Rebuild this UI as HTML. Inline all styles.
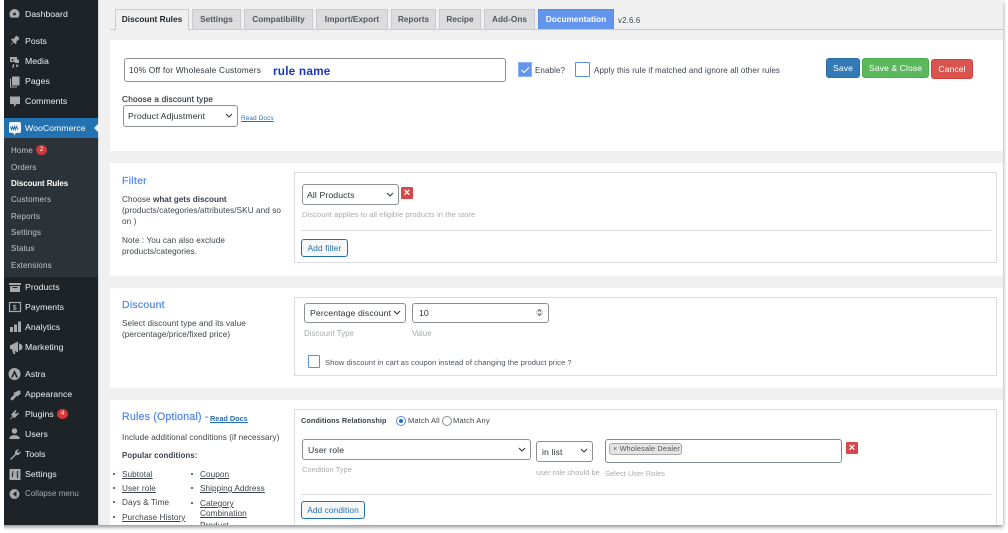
<!DOCTYPE html>
<html><head><meta charset="utf-8"><style>
html,body{margin:0;padding:0;background:#fff}
#r{position:relative;width:1008px;height:533px;overflow:hidden;background:#fff;font-family:"Liberation Sans",sans-serif;color:#3c434a}
#r div,#r span.a,#r svg{position:absolute}
.t{white-space:nowrap;font-size:8.2px;line-height:14px;letter-spacing:.07px}
.m{left:25px;color:#eef0f1;font-size:8.7px;letter-spacing:.04px;line-height:12px;white-space:nowrap}
.s{left:11px;color:#c3c6c8;font-size:8px;letter-spacing:.16px;line-height:12px;white-space:nowrap}
.tab{top:9px;height:19px;background:#dcdcde;border:1px solid #c9cbce;border-bottom:0;font-size:8.3px;font-weight:bold;color:#50575e;text-align:center;line-height:19px;letter-spacing:0;box-sizing:content-box;white-space:nowrap}
.p{left:110px;width:893px;background:#fff}
.b{left:294px;width:703px;background:#fff;border:1px solid #dcdcde;box-sizing:border-box}
.i{background:#fff;border:1px solid #8c8f94;border-radius:3px;box-sizing:border-box;font-size:8.7px;color:#2c3338;white-space:nowrap;letter-spacing:.1px}
.h{color:#4f86e8;font-size:10.5px;line-height:14px;letter-spacing:.25px;white-space:nowrap;-webkit-text-stroke:.2px #4f86e8}
.g{color:#a7aaad;font-size:7.6px;letter-spacing:.05px;line-height:11px;white-space:nowrap}
.x{width:12px;height:12px;background:#d9474a;border-radius:1px;color:#fff;font-size:11px;font-weight:bold;text-align:center;line-height:12px}
.u{text-decoration:underline}
.btn{color:#fff;font-size:8.6px;text-align:center;border-radius:3px;box-sizing:border-box;letter-spacing:.1px;white-space:nowrap}
.d{width:2px;height:2px;border-radius:50%;background:#3c434a}
</style></head><body><div id="r">

<div style="left:0;top:0;width:1003px;height:525px;background:#f0f0f1;box-shadow:0 2px 4px rgba(0,0,0,.45)"></div>
<div style="left:0;top:0;width:4px;height:533px;background:#fff"></div>

<!-- sidebar -->
<div style="left:4px;top:0;width:94px;height:525px;background:#1d2327"></div>
<div style="left:98px;top:0;width:1px;height:525px;background:#d5d6d7"></div>
<div style="left:4px;top:118px;width:94px;height:20px;background:#2271b1"></div>
<div style="left:4px;top:138px;width:94px;height:139px;background:#2c3338"></div>
<svg style="left:94px;top:123px" width="5" height="10"><path d="M5 0L0 5L5 10Z" fill="#f0f0f1"/></svg>

<svg style="left:0;top:0" width="26" height="510" viewBox="0 0 26 510" fill="#a7aaad">
<path d="M9.5 14a5 5 0 0 1 10 0c0 1.5-.6 2.8-1.4 3.600h-7.200C10.100 16.800 9.500 15.500 9.500 14z"/>
<circle cx="14.500" cy="14" r="1.400" fill="#1d2327"/>
<path d="M10 46l3-4.500-2-2 1-1 1.500.5 2.500-3 1-.2 2.300 2.500-.2 1-3 2.500.5 1.500-1 1-2-2z"/>
<path d="M10 57h7v2.500h2V63h-4v-1h-5zM12.500 59a1 1 0 1 0 .1 0zM17 64.500a1.200 1.200 0 1 0 .1 0zM13 64v1.800a1 1 0 1 0 1 1V64z"/>
<path d="M12 76.500h7.500v9H12zM10 78.500h1v8h6v1h-7z"/>
<path d="M10 96.500h10v7.500h-3.500l-2.500 3v-3h-4z"/>
<rect x="9" y="122" width="12" height="11" rx="2" fill="#f0f0f1"/><path d="M13 133l2 2.500 .5-2.500z" fill="#f0f0f1"/><path d="M10.500 126.500l1 3 1-2.500 1 2.500 1-3 1 3 1-3 1.500 3" stroke="#2271b1" stroke-width="1" fill="none"/>
<path d="M9 283h12v2H9zM10 286h10v6H10z"/><rect x="12.500" y="287" width="5" height="1" fill="#1d2327"/>
<rect x="9.500" y="302.500" width="11" height="9" fill="none" stroke="#a7aaad" stroke-width="1.200"/><text x="12.700" y="310" font-size="7" font-family="Liberation Sans" font-weight="bold">$</text>
<path d="M10 327h3v5h-3zM14 324.500h3v7.500h-3zM18 321.500h3v10.500h-3z"/>
<path d="M11 345l7-3.500v11l-7-3.500h-1v-4zM12 350l1.500 4h2l-1-3.500zM19 343.500a3.500 3.500 0 0 1 0 7z"/>
<circle cx="14.500" cy="374" r="6"/><path d="M14.500 370l-3.500 7.500h1.800l1.700-3.700 1.700 3.700H18z" fill="#1d2327"/>
<path d="M10 399l4.500-5-1-1 1-1 1 .5 2.500-2 3 .5-1 1 1 2-2.500 1-.5 1.500-1.500-.5-4 4.500z"/>
<path d="M10 419l2.500-3-1.500-1.500 2.500-2.500 2-2 1 1-1.500 2 1 1 2-1.500 1 1-2 2-2.500 2.500-1.500-1-2.500 2.500z"/>
<circle cx="14.500" cy="431" r="2.700"/><path d="M9.500 439v-2l3-1.800h4l3 1.800v2z"/>
<path d="M10 459l5-5a3.500 3.500 0 0 1 4-4.500l-2 2 1.500 1.500 2-2a3.500 3.500 0 0 1-4.500 4l-5 5z"/>
<path d="M9.500 469h11v11h-11z"/><path d="M12.500 477v-4M12 472h1.500M17.500 471v2M17.500 475v3M16.500 474h2" stroke="#1d2327" stroke-width="1.100" fill="none"/>
<circle cx="14.500" cy="494" r="5"/><path d="M16.500 491l-3.800 3 3.800 3z" fill="#1d2327"/>
</svg>

<div class="m" style="top:8px">Dashboard</div>
<div class="m" style="top:35px">Posts</div>
<div class="m" style="top:55px">Media</div>
<div class="m" style="top:75px">Pages</div>
<div class="m" style="top:95px">Comments</div>
<div class="m" style="top:122px;color:#fff">WooCommerce</div>
<div class="s" style="top:145px">Home</div>
<div style="left:36px;top:145px;width:11px;height:10px;border-radius:5px;background:#d63638;color:#fff;font-size:6.500px;line-height:10px;text-align:center">2</div>
<div class="s" style="top:162px">Orders</div>
<div class="s" style="top:178px;color:#fff;font-weight:bold;letter-spacing:-.08px">Discount Rules</div>
<div class="s" style="top:194px">Customers</div>
<div class="s" style="top:211px">Reports</div>
<div class="s" style="top:227px">Settings</div>
<div class="s" style="top:243px">Status</div>
<div class="s" style="top:260px">Extensions</div>
<div class="m" style="top:281px">Products</div>
<div class="m" style="top:301px">Payments</div>
<div class="m" style="top:321px">Analytics</div>
<div class="m" style="top:341px">Marketing</div>
<div class="m" style="top:368px">Astra</div>
<div class="m" style="top:388px">Appearance</div>
<div class="m" style="top:408px">Plugins</div>
<div style="left:57px;top:409px;width:11px;height:10px;border-radius:5px;background:#d63638;color:#fff;font-size:6.500px;line-height:10px;text-align:center">4</div>
<div class="m" style="top:428px">Users</div>
<div class="m" style="top:448px">Tools</div>
<div class="m" style="top:468px">Settings</div>
<div class="m" style="top:488px;color:#a7aaad;font-size:8px">Collapse menu</div>

<!-- tabs -->
<div style="left:110px;top:29px;width:893px;height:1px;background:#c9cbce"></div>
<div class="tab" style="left:115px;width:72px;background:#f0f0f1;height:20px;color:#1d2327">Discount Rules</div>
<div class="tab" style="left:192px;width:47px">Settings</div>
<div class="tab" style="left:244px;width:67px">Compatibility</div>
<div class="tab" style="left:316px;width:70px">Import/Export</div>
<div class="tab" style="left:391px;width:43px">Reports</div>
<div class="tab" style="left:439px;width:40px">Recipe</div>
<div class="tab" style="left:484px;width:49px">Add-Ons</div>
<div class="tab" style="left:538px;width:74px;background:#6495ed;border-color:#5c8de0;color:#fff">Documentation</div>
<div class="t" style="left:618px;top:14px;font-size:7.800px;letter-spacing:.2px;color:#3c434a">v2.6.6</div>

<!-- panel 1 -->
<div class="p" style="top:40px;height:111px"></div>
<div class="i" style="left:124px;top:58px;width:382px;height:24px;line-height:22px;padding-left:4px;font-size:8.300px;letter-spacing:.22px">10% Off for Wholesale Customers</div>
<div class="t" style="left:273px;top:64px;font-size:11.800px;line-height:14px;font-weight:bold;color:#1b35c4;letter-spacing:.2px">rule name</div>
<div style="left:518px;top:62px;width:14px;height:15px;background:#6495ed;border:1px solid #8fb0ee;box-sizing:border-box"></div>
<svg style="left:518px;top:62px" width="14" height="15"><path d="M3.500 8l2.500 2.500L11 5.500" stroke="#fff" stroke-width="1.100" fill="none"/></svg>
<div class="t" style="left:535px;top:64px;font-size:8px;letter-spacing:.1px">Enable?</div>
<div style="left:575px;top:62px;width:15px;height:15px;background:#fff;border:1.200px solid #5b8dea;border-radius:1px;box-sizing:border-box"></div>
<div class="t" style="left:594px;top:64px;font-size:8px;letter-spacing:.12px">Apply this rule if matched and ignore all other rules</div>
<div class="btn" style="left:826px;top:58px;width:34px;height:20px;background:#337ab7;border:1px solid #2e6da4;line-height:19px">Save</div>
<div class="btn" style="left:862px;top:58px;width:67px;height:20px;background:#5cb85c;border:1px solid #4cae4c;line-height:19px">Save &amp; Close</div>
<div class="btn" style="left:931px;top:59px;width:42px;height:20px;background:#d9534f;border:1px solid #d43f3a;line-height:18px">Cancel</div>
<div class="t" style="left:122px;top:92px;font-size:8.300px;letter-spacing:.2px;color:#2c3338;-webkit-text-stroke:.15px #2c3338">Choose a discount type</div>
<div class="i" style="left:123px;top:105px;width:115px;height:22px;line-height:20px;padding-left:4px">Product Adjustment</div>
<svg style="left:225px;top:113px" width="8" height="6"><path d="M1 1l3 3 3-3" stroke="#2c3338" stroke-width="1" fill="none"/></svg>
<div class="t u" style="left:241px;top:112px;font-size:6.300px;color:#2271b1;letter-spacing:.18px">Read Docs</div>

<!-- panel 2 -->
<div class="p" style="top:163px;height:113px"></div>
<div class="h" style="left:122px;top:174px">Filter</div>
<div class="t" style="left:122px;top:193px;color:#3c434a">Choose <b style="letter-spacing:-.03px">what gets discount</b></div>
<div class="t" style="left:122px;top:204px">(products/categories/attributes/SKU and so</div>
<div class="t" style="left:122px;top:215px">on )</div>
<div class="t" style="left:122px;top:234px">Note : You can also exclude</div>
<div class="t" style="left:122px;top:245px">products/categories.</div>
<div class="b" style="top:172px;height:91px"></div>
<div class="i" style="left:302px;top:184px;width:97px;height:21px;line-height:20px;padding-left:4px">All Products</div>
<svg style="left:386px;top:192px" width="8" height="6"><path d="M1 1l3 3 3-3" stroke="#2c3338" stroke-width="1" fill="none"/></svg>
<div class="x" style="left:401px;top:187px">×</div>
<div class="g" style="left:302px;top:209px">Discount applies to all eligible products in the store</div>
<div style="left:301px;top:230px;width:690px;height:1px;background:#dcdcde"></div>
<div class="btn" style="left:301px;top:239px;width:47px;height:18px;background:#f6f7f7;border:1px solid #2271b1;color:#2271b1;line-height:17px;font-size:8.300px">Add filter</div>

<!-- panel 3 -->
<div class="p" style="top:288px;height:100px"></div>
<div class="h" style="left:122px;top:298px">Discount</div>
<div class="t" style="left:122px;top:317px">Select discount type and its value</div>
<div class="t" style="left:122px;top:328px">(percentage/price/fixed price)</div>
<div class="b" style="top:297px;height:79px"></div>
<div class="i" style="left:304px;top:303px;width:102px;height:20px;line-height:19px;padding-left:5px">Percentage discount</div>
<svg style="left:393px;top:310px" width="8" height="6"><path d="M1 1l3 3 3-3" stroke="#2c3338" stroke-width="1" fill="none"/></svg>
<div class="i" style="left:412px;top:303px;width:137px;height:20px;line-height:19px;padding-left:6px">10</div>
<svg style="left:536px;top:307px" width="7" height="11"><circle cx="3.500" cy="5.500" r="3.300" fill="#eee" stroke="#bbb" stroke-width=".5"/><path d="M2 4.500l1.500-1.700L5 4.500M2 6.500l1.500 1.700L5 6.500" stroke="#333" stroke-width=".7" fill="none"/></svg>
<div class="g" style="left:304px;top:328px;font-size:7.800px">Discount Type</div>
<div class="g" style="left:412px;top:328px;font-size:7.800px">Value</div>
<div style="left:308px;top:355px;width:12px;height:13px;background:#fff;border:1.200px solid #5b8dea;border-radius:1px;box-sizing:border-box"></div>
<div class="t" style="left:325px;top:356px;font-size:7.700px;letter-spacing:.02px;color:#50575e">Show discount in cart as coupon instead of changing the product price ?</div>

<!-- panel 4 -->
<div class="p" style="top:400px;height:125px"></div>
<div class="h" style="left:122px;top:410px;font-size:10.600px;letter-spacing:.2px">Rules (Optional) -</div>
<div class="t u" style="left:210px;top:412px;font-size:7.300px;font-weight:bold;color:#2271b1;letter-spacing:0">Read Docs</div>
<div class="t" style="left:122px;top:431px">Include additional conditions (if necessary)</div>
<div class="t" style="left:122px;top:449px;font-weight:bold;font-size:7.900px">Popular conditions:</div>
<div class="d" style="left:113px;top:473px"></div><div class="t u" style="left:122px;top:468px">Subtotal</div>
<div class="d" style="left:113px;top:487px"></div><div class="t u" style="left:122px;top:482px">User role</div>
<div class="d" style="left:113px;top:501px"></div><div class="t" style="left:122px;top:496px">Days &amp; Time</div>
<div class="d" style="left:113px;top:516px"></div><div class="t u" style="left:122px;top:511px">Purchase History</div>
<div class="d" style="left:191px;top:473px"></div><div class="t u" style="left:200px;top:468px">Coupon</div>
<div class="d" style="left:191px;top:487px"></div><div class="t u" style="left:200px;top:482px">Shipping Address</div>
<div class="d" style="left:191px;top:502px"></div><div class="t u" style="left:200px;top:497px">Category</div>
<div class="t u" style="left:200px;top:507px">Combination</div>
<div class="t u" style="left:200px;top:521px;height:4px;overflow:hidden;line-height:10px">Product</div>
<div class="b" style="top:409px;height:116px;border-bottom:0;width:703px"></div>
<div class="t" style="left:301px;top:414px;font-size:7.300px;font-weight:bold;color:#3c434a">Conditions Relationship</div>
<div style="left:396px;top:416px;width:10px;height:10px;border-radius:50%;border:1px solid #5b8dea;box-sizing:border-box;background:#fff"></div>
<div style="left:399px;top:419px;width:4px;height:4px;border-radius:50%;background:#2271b1"></div>
<div class="t" style="left:408px;top:414px;font-size:7.500px;letter-spacing:.15px">Match All</div>
<div style="left:442px;top:416px;width:10px;height:10px;border-radius:50%;border:1px solid #8c8f94;box-sizing:border-box;background:#fff"></div>
<div class="t" style="left:453px;top:414px;font-size:7.500px;letter-spacing:.2px">Match Any</div>
<div class="i" style="left:302px;top:439px;width:229px;height:21px;line-height:20px;padding-left:5px">User role</div>
<svg style="left:518px;top:447px" width="8" height="6"><path d="M1 1l3 3 3-3" stroke="#2c3338" stroke-width="1" fill="none"/></svg>
<div class="i" style="left:536px;top:441px;width:57px;height:21px;line-height:20px;padding-left:5px">in list</div>
<svg style="left:580px;top:448px" width="8" height="6"><path d="M1 1l3 3 3-3" stroke="#2c3338" stroke-width="1" fill="none"/></svg>
<div class="i" style="left:605px;top:439px;width:237px;height:24px;border-color:#7e8993"></div>
<div style="left:609px;top:443px;width:73px;height:12px;background:#e4e4e4;border:1px solid #aaa;border-radius:3px;box-sizing:border-box"></div>
<div class="t" style="left:613px;top:442px;font-size:7.300px;letter-spacing:.17px;color:#50575e">× Wholesale Dealer</div>
<div class="x" style="left:846px;top:442px">×</div>
<div class="g" style="left:302px;top:464px;font-size:7.400px">Condition Type</div>
<div class="g" style="left:536px;top:467px;font-size:7.400px">user role should be</div>
<div class="g" style="left:605px;top:468px;font-size:7.400px">Select User Roles</div>
<div style="left:301px;top:494px;width:690px;height:1px;background:#dcdcde"></div>
<div class="btn" style="left:301px;top:501px;width:64px;height:18px;background:#f6f7f7;border:1px solid #2271b1;color:#2271b1;line-height:17px;font-size:8.300px">Add condition</div>

</div></body></html>
